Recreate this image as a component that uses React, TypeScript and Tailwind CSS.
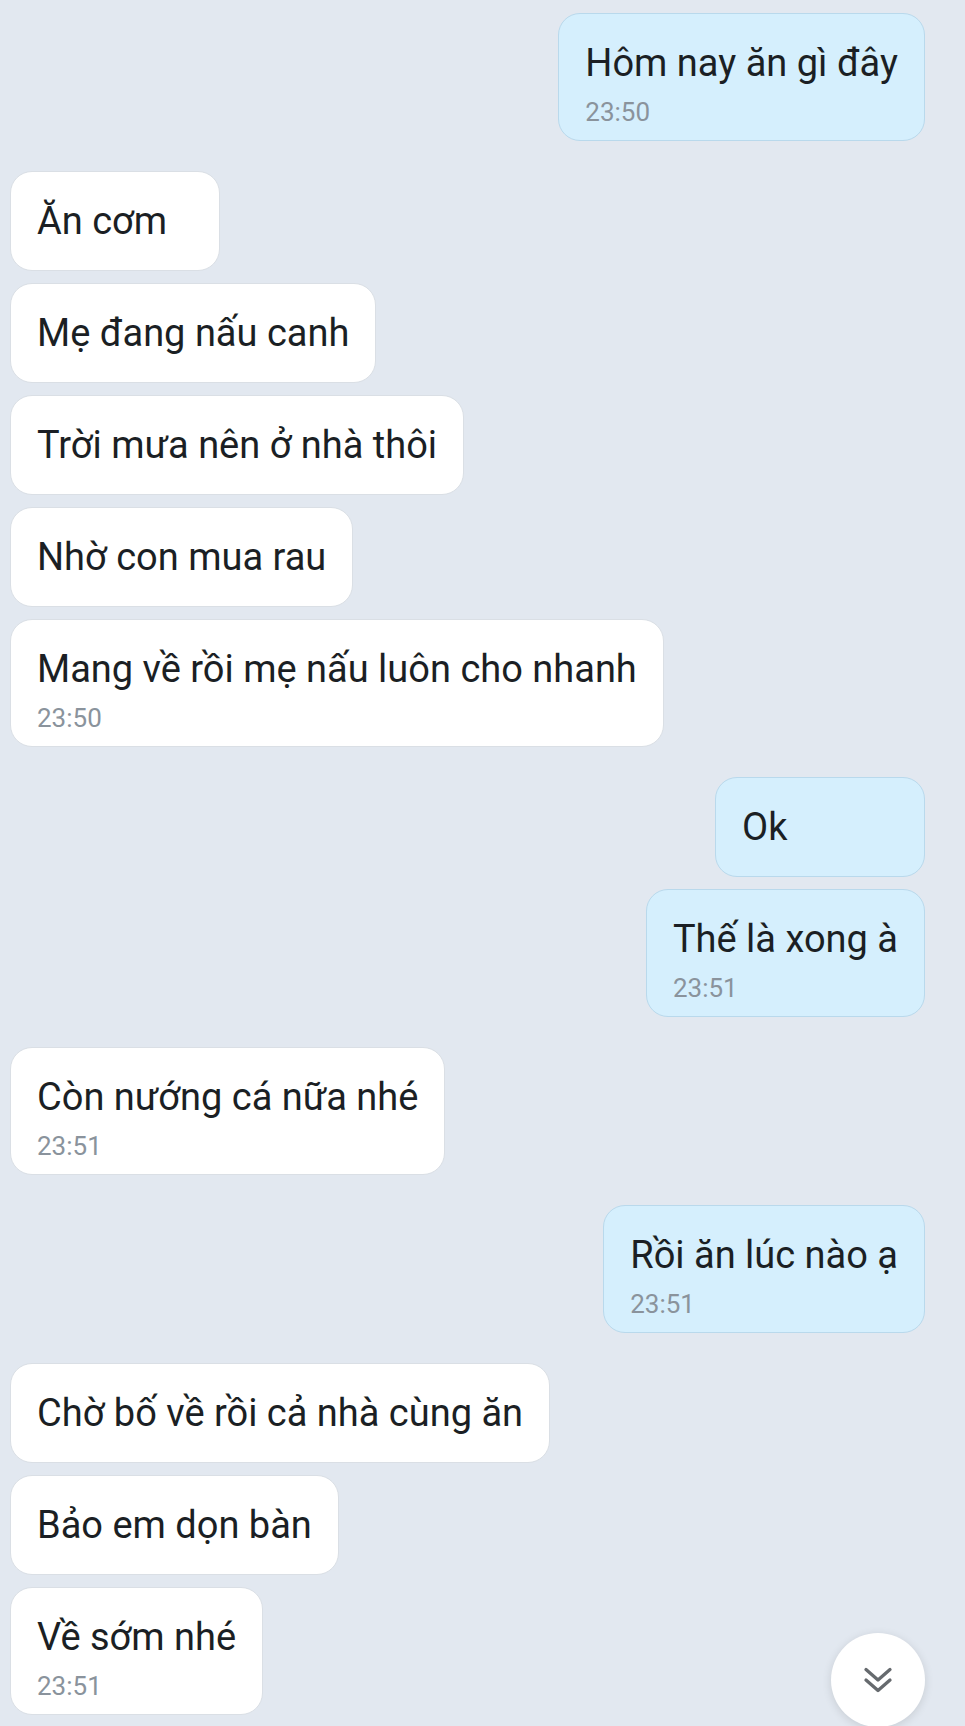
import React from "react";

type Msg = { side: "in" | "out"; text: string; time?: string; minW?: boolean };

const groups: Msg[][] = [
  [{ side: "out", text: "Hôm nay ăn gì đây", time: "23:50" }],
  [
    { side: "in", text: "Ăn cơm", minW: true },
    { side: "in", text: "Mẹ đang nấu canh" },
    { side: "in", text: "Trời mưa nên ở nhà thôi" },
    { side: "in", text: "Nhờ con mua rau" },
    { side: "in", text: "Mang về rồi mẹ nấu luôn cho nhanh", time: "23:50" },
  ],
  [
    { side: "out", text: "Ok", minW: true },
    { side: "out", text: "Thế là xong à", time: "23:51" },
  ],
  [{ side: "in", text: "Còn nướng cá nữa nhé", time: "23:51" }],
  [{ side: "out", text: "Rồi ăn lúc nào ạ", time: "23:51" }],
  [
    { side: "in", text: "Chờ bố về rồi cả nhà cùng ăn" },
    { side: "in", text: "Bảo em dọn bàn" },
    { side: "in", text: "Về sớm nhé", time: "23:51" },
  ],
];

function Bubble({ m }: { m: Msg }) {
  const out = m.side === "out";
  return (
    <div className={`flex ${out ? "justify-end" : "justify-start"}`}>
      <div
        className={`rounded-[22px] border px-[26px] pt-[26px] ${
          m.time ? "pb-[13px]" : "pb-[26px]"
        } ${m.minW ? "min-w-[210px]" : ""} ${
          out ? "bg-[#d5effd] border-[#b9d9ec]" : "bg-white border-[#dadfe5]"
        }`}
      >
        <div className="text-[38px] leading-[46px] text-[#1b1f24]">{m.text}</div>
        {m.time && (
          <div className="text-[26px] leading-[30px] mt-[11px] text-[#8a939c]">{m.time}</div>
        )}
      </div>
    </div>
  );
}

export default function App() {
  return (
    <div
      className="relative w-[965px] h-[1726px] overflow-hidden bg-[#e2e8f0]"
      style={{ fontFamily: "Roboto, 'Noto Sans', sans-serif" }}
    >
      <div className="flex flex-col gap-[30px] pt-[13px] pl-[10px] pr-[40px]">
        {groups.map((g, i) => (
          <div key={i} className="flex flex-col gap-[12px]">
            {g.map((m, j) => (
              <Bubble key={j} m={m} />
            ))}
          </div>
        ))}
      </div>
      <div className="absolute left-[831px] top-[1633px] w-[94px] h-[94px] rounded-full bg-white shadow-[0_2px_10px_rgba(0,0,0,0.12)] flex items-center justify-center">
        <svg width="36" height="36" viewBox="0 0 24 24" fill="none" stroke="#666a6e" strokeWidth="2.2" strokeLinecap="round" strokeLinejoin="round">
          <path d="M4 5l8 7 8-7" />
          <path d="M4 12l8 7 8-7" />
        </svg>
      </div>
    </div>
  );
}
